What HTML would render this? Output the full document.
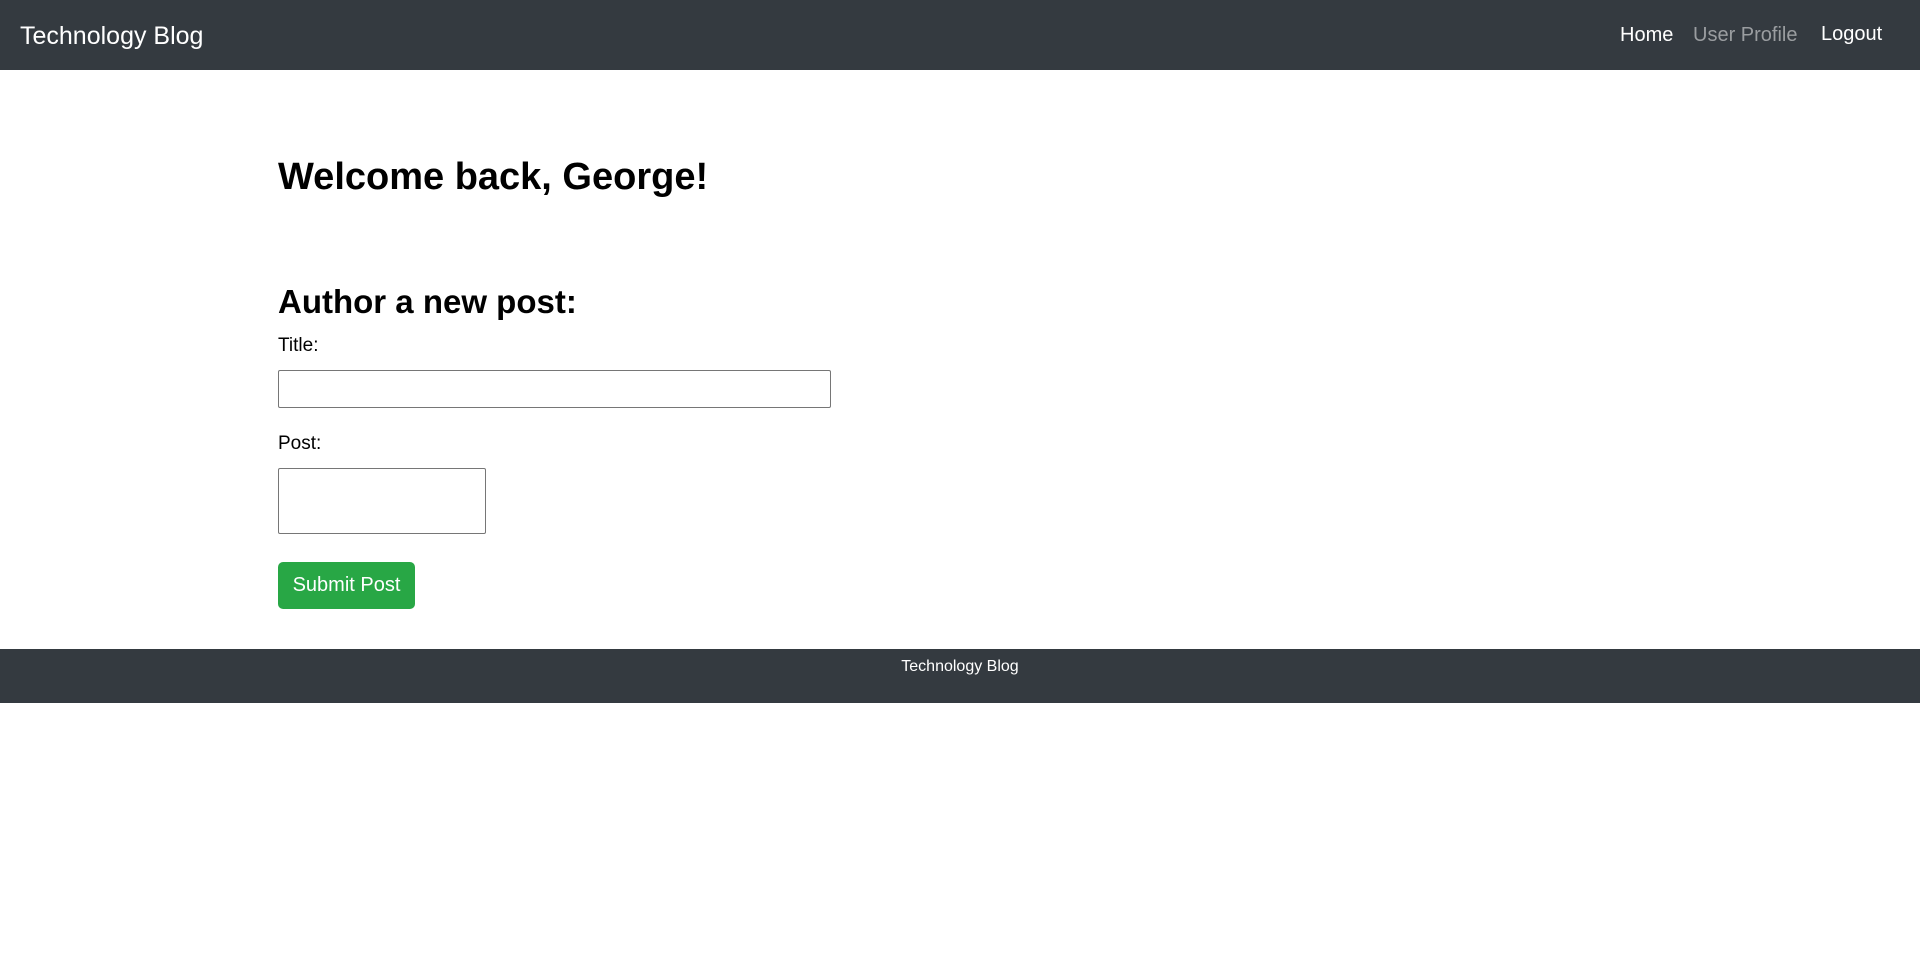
<!DOCTYPE html>
<html><head><meta charset="utf-8"><style>
*{margin:0;padding:0;box-sizing:border-box}
body{width:1920px;height:953px;background:#fff;font-family:"Liberation Sans",sans-serif;color:#212529;position:relative;overflow:hidden}
.nav{position:absolute;left:0;top:0;width:1920px;height:70px;background:#343a40}
.t{position:absolute;white-space:nowrap;line-height:1}
.brand{left:20px;top:24px;font-size:25px;color:#fff}
.nl{top:25px;font-size:20px}
h1{position:absolute;left:278px;top:158px;font-size:38px;font-weight:600;color:#000;line-height:1}
h2{position:absolute;left:278px;top:285px;font-size:33px;font-weight:600;color:#000;line-height:1}
.lbl{left:278px;font-size:19px;color:#000}
.inp{position:absolute;border:1px solid #767676;border-radius:2px;background:#fff}
.btn{position:absolute;left:278px;top:562px;width:137px;height:47px;background:#28a745;border-radius:5px;color:#fff;font-size:20px;text-align:center;line-height:47px}
.foot{position:absolute;left:0;top:649px;width:1920px;height:54px;background:#343a40}
</style></head><body>
<div class="nav">
<div class="t brand">Technology Blog</div>
<div class="t nl" style="left:1620px;color:#fff">Home</div>
<div class="t nl" style="left:1693px;color:#9a9da0">User Profile</div>
<div class="t nl" style="left:1821px;color:#fff;top:24px">Logout</div>
</div>
<h1>Welcome back, George!</h1>
<h2>Author a new post:</h2>
<div class="t lbl" style="top:336px">Title:</div>
<div class="inp" style="left:278px;top:370px;width:553px;height:38px"></div>
<div class="t lbl" style="top:434px">Post:</div>
<div class="inp" style="left:278px;top:468px;width:208px;height:66px"></div>
<div class="btn">Submit Post</div>
<div class="foot"><div class="t" style="left:0;width:1920px;text-align:center;top:10px;font-size:16px;color:#fff">Technology Blog</div></div>
</body></html>
